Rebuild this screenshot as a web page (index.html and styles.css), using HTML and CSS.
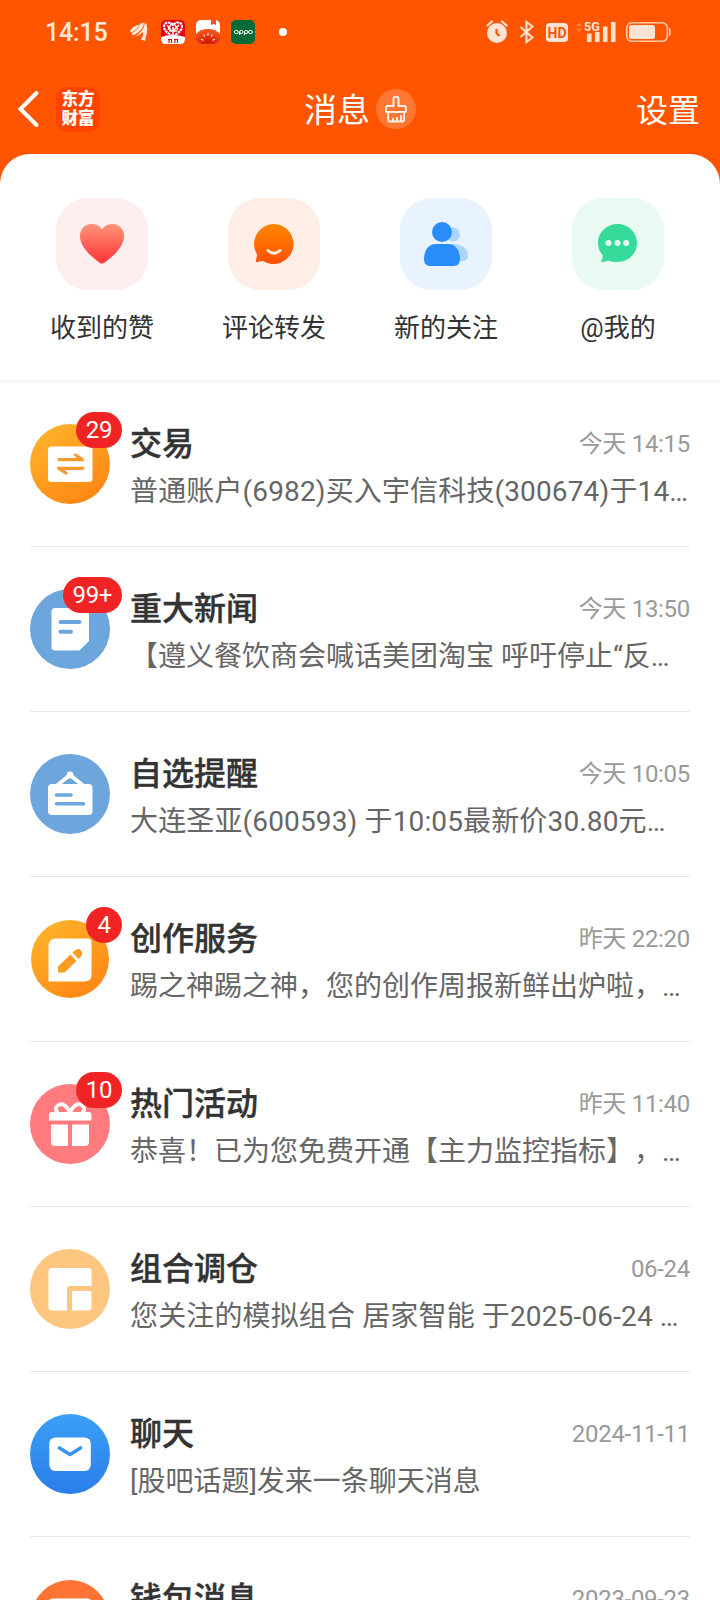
FILE: index.html
```html
<!DOCTYPE html>
<html lang="zh-CN">
<head>
<meta charset="utf-8">
<title>消息</title>
<link rel="stylesheet" href="styles.css">
</head>
<body>
<div class="screen">
  <div class="status">
    <span class="clock">14:15</span>
    <svg class="st-wing" width="18" height="20" viewBox="0 0 18 20" fill="#ffe9dc"><path d="M0 8.500Q3 4 9.500 2.500Q8 8 1 10.500Z"/><path d="M10 1.800L14.200 .5Q13 9 3 13.500L1.500 11.200Q9 8 10 1.800Z"/><path d="M15 .5Q18 3 17 10Q16 15 15 19L11 17.500Q14.500 11.500 12.500 10Q10 13.500 5 14.500Q14 9 15 .5Z"/></svg>
    <svg class="st-app" width="24" height="24" viewBox="0 0 24 24"><rect width="24" height="24" rx="5" fill="#e60012"/><path d="M0 17Q12 13 24 17V19Q24 24 19 24H5Q0 24 0 19Z" fill="#fff"/><path d="M12 16C6 13 3 10 3 6.500C3 2 9 1 12 5C15 1 21 2 21 6.500C21 10 18 13 12 16Z" fill="none" stroke="#fff" stroke-width="2.200" stroke-dasharray="2.600 .7"/><path d="M6 5L10 10M10 4L7 10M14 5L17 10M18 5L13 10M12 7V19M8 11H16" stroke="#fff" stroke-width="1.500"/><path d="M8 19V23M10.500 19V23M14 19V23M16.500 19V23M7 19.500H10.500M13 19.500H16.500" stroke="#c01622" stroke-width="1.200"/></svg>
    <svg class="st-app" width="24" height="24" viewBox="0 0 24 24"><defs><radialGradient id="tom" cx=".5" cy=".9" r=".7"><stop offset="0" stop-color="#cf1408"/><stop offset="1" stop-color="#f2501c"/></radialGradient></defs><rect width="24" height="24" rx="5" fill="#fff"/><path d="M15 0H20V5L17.500 4L15 5Z" fill="#f0541e"/><path d="M0 14Q4 9 12 9Q20 9 24 14V19Q24 24 19 24H5Q0 24 0 19Z" fill="url(#tom)"/><path d="M12 13.500V15M8 15L8.500 16M16 15L15.500 16M5.500 19.500L7 20M18.500 19.500L17 20" stroke="#ffe7d0" stroke-width="1.300" stroke-linecap="round"/></svg>
    <svg class="st-app" width="24" height="24" viewBox="0 0 24 24" fill="none" stroke="#fff" stroke-width="1"><rect width="24" height="24" rx="5" fill="#046a38" stroke="none"/><ellipse cx="5.400" cy="12" rx="2" ry="1.600"/><path d="M8.600 15V12"/><ellipse cx="10.300" cy="12" rx="1.700" ry="1.600"/><path d="M13.500 15V12"/><ellipse cx="15.200" cy="12" rx="1.700" ry="1.600"/><ellipse cx="19.500" cy="12" rx="2" ry="1.600"/></svg>
    <span class="dot"></span>
    <svg class="st-right" width="190" height="28" viewBox="0 0 190 28" fill="#ffe4d5">
      <circle cx="14" cy="15" r="10"/><path d="M4.500 7.500L9 3.500M23.500 7.500L19 3.500" stroke="#ffe4d5" stroke-width="2.200" stroke-linecap="round"/><path d="M13.500 11V15L16.500 18" fill="none" stroke="#ff5500" stroke-width="2.200"/>
      <path d="M37.500 9L49.500 19.500L43.500 24V4L49.500 8.500L37.500 19" fill="none" stroke="#ffe4d5" stroke-width="2"/>
      <rect x="63" y="5" width="22" height="19" rx="4"/><text x="74" y="20" text-anchor="middle" class="hd">HD</text>
      <path d="M93 8L96 4.500L99 8ZM93 10.500L96 14L99 10.500Z" fill="#ff7f3e"/>
      <text x="101" y="12.500" class="g5">5G</text>
      <path d="M104 15.500H108.500V24H104ZM112 14H116.500V24H112ZM120 8.500H124.500V24H120ZM128 4H132.500V24H128Z"/>
      <rect x="143.800" y="4.800" width="40.500" height="18.500" rx="5" fill="none" stroke="#ffcaa9" stroke-width="1.600"/><rect x="146" y="7" width="26" height="14" rx="2.500"/><path d="M186 10Q187.500 10 187.500 11.500V16.500Q187.500 18 186 18Z"/>
    </svg>
  </div>
  <div class="nav">
    <svg class="back" width="24" height="40" viewBox="0 0 24 40" fill="none" stroke="#fff" stroke-width="4" stroke-linecap="round" stroke-linejoin="miter"><path d="M19.500 4L3.500 20L19.500 36"/></svg>
    <div class="logo"><span>东方</span><span>财富</span></div>
    <div class="heading"><span>消息</span>
      <svg width="40" height="40" viewBox="0 0 40 40" fill="none" stroke="#fff0e6" stroke-width="1.900" stroke-linejoin="round"><circle cx="20" cy="20" r="20" fill="#ff7733" stroke="none"/><path d="M17.500 17V9.500Q17.500 8 19 8H21Q22.500 8 22.500 9.500V17H28.500Q30 17 30 18.500V22Q30 23 29 23H11Q10 23 10 22V18.500Q10 17 11.500 17Z"/><path d="M12.200 23V31Q12.200 32.500 13.700 32.500H26.300Q28 32.500 28 31V23M17 32V29M21 32V28M25 32V26"/></svg>
    </div>
    <span class="settings">设置</span>
  </div>
  <main class="sheet">
    <div class="shortcuts">
      <div class="short"><div class="tile pink"><svg width="92" height="92" viewBox="0 0 92 92"><defs><linearGradient id="h" x2="0" y2="1"><stop stop-color="#ff9478"/><stop offset=".85" stop-color="#ff4040"/></linearGradient></defs><path d="M46 31.500C49 27 53 26 57 26C63 26 68 31 68 38C68 48 59 57 48 65Q46 66.500 44 65C33 57 24 48 24 38C24 31 29 26 35 26C39 26 43 27 46 31.500Z" fill="url(#h)"/></svg></div><span>收到的赞</span></div>
      <div class="short"><div class="tile peach"><svg width="92" height="92" viewBox="0 0 92 92"><defs><linearGradient id="c" x2="0" y2="1"><stop stop-color="#ff8700"/><stop offset="1" stop-color="#ff5000"/></linearGradient></defs><path d="M46 26A20 20 0 1 1 35 63Q32 63 29.500 64Q28 64.500 28 63C28 60 29.500 59 28.800 56A20 20 0 0 1 46 26Z" fill="url(#c)"/><path d="M40 52.500Q46 58 52 52.500" fill="none" stroke="#ffeee4" stroke-width="3" stroke-linecap="round"/></svg></div><span>评论转发</span></div>
      <div class="short"><div class="tile blue"><svg width="92" height="92" viewBox="0 0 92 92"><g fill="#a9d5ff"><circle cx="53" cy="36.500" r="7"/><path d="M50 46H54Q68 47 68 58Q68 63 62 63H50Z"/></g><g fill="#288dfa"><circle cx="42" cy="34" r="10"/><path d="M36 46H48C55 46 60 52 60 61Q60 68 54 68H30Q24 68 24 61C24 52 29 46 36 46Z"/></g></svg></div><span>新的关注</span></div>
      <div class="short"><div class="tile green"><svg width="92" height="92" viewBox="0 0 92 92"><path d="M45.500 26C56 26 65 34 65 45S56 64 45.500 64Q40 64 36 62.500Q33 64 30 64Q28.500 64 29.800 62Q31 60 30.500 57Q26 52 26 45C26 34 35 26 45.500 26Z" fill="#36db9c"/><g fill="#e8faf2"><circle cx="36.500" cy="45" r="3"/><circle cx="45.500" cy="45" r="3"/><circle cx="54.200" cy="45" r="3"/></g></svg></div><span>@我的</span></div>
    </div>
    <div class="row"><div class="avatar"><svg width="80" height="80" viewBox="0 0 80 80"><defs><linearGradient id="o" x1=".1" x2=".8" y2="1"><stop stop-color="#ffb52c"/><stop offset="1" stop-color="#ff8513"/></linearGradient></defs><circle cx="40" cy="40" r="40" fill="url(#o)"/><rect x="18" y="22.500" width="44.500" height="35.500" rx="3.500" fill="#fff"/><path d="M28.500 34H47L43.500 31Q43.500 29 46 29.500L53 34Q54 35 54 37.200H28.500Q26.500 36 28.500 34ZM52.500 46H34.500L38 49Q38 51 35.500 50.500L28 46Q27 45 27 42.800H54Q55 45 52.500 46Z" fill="#f59a2f"/></svg><b class="badge">29</b></div><div class="body"><div class="top"><h2>交易</h2><time>今天 14:15</time></div><p class="loose">普通账户(6982)买入宇信科技(300674)于14…</p></div></div>
    <div class="row"><div class="avatar"><svg width="80" height="80" viewBox="0 0 80 80"><circle cx="40" cy="40" r="40" fill="#6ca6dc"/><path d="M25 19H55.500Q59 19 59 22.500V52L49.500 61.500H25Q21.500 61.500 21.500 58V22.500Q21.500 19 25 19Z" fill="#fff"/><path d="M30.500 33H49.500M30.500 42.800H41" stroke="#6ca6dc" stroke-width="4" stroke-linecap="round"/></svg><b class="badge">99+</b></div><div class="body"><div class="top"><h2>重大新闻</h2><time>今天 13:50</time></div><p>【遵义餐饮商会喊话美团淘宝 呼吁停止“反…</p></div></div>
    <div class="row"><div class="avatar"><svg width="80" height="80" viewBox="0 0 80 80"><circle cx="40" cy="40" r="40" fill="#6ca6dc"/><path d="M27.500 31L40 21L52.500 31" fill="none" stroke="#fff" stroke-width="4"/><circle cx="40" cy="21" r="3.400" fill="#fff"/><rect x="18" y="30" width="44.500" height="31" rx="4" fill="#fff"/><path d="M26.500 41H41M26.500 49.700H53.500" stroke="#6ca6dc" stroke-width="3.600" stroke-linecap="round"/></svg></div><div class="body"><div class="top"><h2>自选提醒</h2><time>今天 10:05</time></div><p class="loose">大连圣亚(600593) 于10:05最新价30.80元…</p></div></div>
    <div class="row"><div class="avatar"><svg width="80" height="80" viewBox="0 0 80 80"><circle cx="40" cy="40" r="39" fill="url(#o)"/><path d="M26 19.500H58Q61.500 19.500 61.500 23V55.500Q61.500 62.500 54.500 62.500H18.500V27Q18.500 19.500 26 19.500Z" fill="#fff"/><path d="M28 47.500L40.500 35.500L46.500 42L34.500 53.500H28ZM42.500 33.500L45.500 31Q48.500 29 51 31.500Q53.500 34.500 51 37.500L48.500 40Z" fill="#f99c24"/></svg><b class="badge">4</b></div><div class="body"><div class="top"><h2>创作服务</h2><time>昨天 22:20</time></div><p>踢之神踢之神，您的创作周报新鲜出炉啦，…</p></div></div>
    <div class="row"><div class="avatar"><svg width="80" height="80" viewBox="0 0 80 80"><circle cx="40" cy="40" r="40" fill="#ff7b7e"/><g fill="#fff"><path d="M22 28H58.500Q61.500 28 61.500 31V36.500H19V31Q19 28 22 28ZM21 40.500H38V62H25Q21 62 21 58ZM42 40.500H59V58Q59 62 55 62H42Z"/></g><path d="M40 28C36 21 32 19 28.500 21C24 24 25.500 28 29 28M40 28C44 21 48 19 51.500 21C56 24 54.500 28 51 28" fill="none" stroke="#fff" stroke-width="3.600"/></svg><b class="badge">10</b></div><div class="body"><div class="top"><h2>热门活动</h2><time>昨天 11:40</time></div><p>恭喜！已为您免费开通【主力监控指标】，…</p></div></div>
    <div class="row"><div class="avatar"><svg width="80" height="80" viewBox="0 0 80 80"><circle cx="40" cy="40" r="40" fill="#ffc680"/><path d="M22 19H58Q61.500 19 61.500 22.500V37H40Q37 37 37 40V61.500H22Q18.500 61.500 18.500 58V22.500Q18.500 19 22 19ZM42 42H61.500V58Q61.500 61.500 58 61.500H42Z" fill="#fff"/></svg></div><div class="body"><div class="top"><h2>组合调仓</h2><time>06-24</time></div><p class="loose">您关注的模拟组合 居家智能 于2025-06-24 …</p></div></div>
    <div class="row"><div class="avatar"><svg width="80" height="80" viewBox="0 0 80 80"><defs><linearGradient id="m" x2="0" y2="1"><stop stop-color="#3ba0f6"/><stop offset="1" stop-color="#2b7ee9"/></linearGradient></defs><circle cx="40" cy="40" r="40" fill="url(#m)"/><rect x="19.300" y="23.500" width="41.500" height="33.500" rx="6" fill="#fff"/><path d="M29.500 34L40 40.500L50.500 34" fill="none" stroke="#3993f0" stroke-width="3.600" stroke-linecap="round" stroke-linejoin="round"/></svg></div><div class="body"><div class="top"><h2>聊天</h2><time>2024-11-11</time></div><p>[股吧话题]发来一条聊天消息</p></div></div>
    <div class="row"><div class="avatar"><svg width="80" height="80" viewBox="0 0 80 80"><circle cx="40" cy="40" r="39" fill="#ff7434"/><rect x="18.500" y="19.500" width="43" height="40" rx="4" fill="#fff"/></svg></div><div class="body"><div class="top"><h2>钱包消息</h2><time>2023-09-23</time></div></div></div>
  </main>
</div>
</body>
</html>
```
FILE: styles.css
```css
* { box-sizing: border-box; }
body { margin: 0; background: #fff; font-family: Roboto, "Noto Sans CJK SC", sans-serif; text-spacing-trim: space-all; }
svg { display: block; flex: none; }
.screen { width: 720px; height: 1600px; overflow: hidden; background: #ff5500; display: flex; flex-direction: column; }
.status { height: 64px; flex: none; display: flex; align-items: center; padding-left: 45px; }
.clock { width: 85px; padding-top: 2px; font-size: 25px; line-height: 62px; font-weight: 500; letter-spacing: -.2px; color: #ffe9dc; }
.st-wing { margin-right: 13px; }
.st-app { margin-right: 11px; }
.dot { width: 8px; height: 8px; border-radius: 50%; background: #fff; margin-left: 13px; }
.st-right { margin-left: auto; margin-right: 47px; }
.hd { font: 700 14px Roboto, sans-serif; fill: #ff5500; }
.g5 { font: 700 12.500px Roboto, sans-serif; }
.nav { height: 90px; flex: none; display: flex; align-items: center; padding: 0 20px 0 17px; position: relative; }
.back { margin-right: 15px; }
.logo { width: 44px; height: 45px; border-radius: 10px; background: #ff4400; color: #fff; display: flex; flex-direction: column; align-items: center; justify-content: center; font-size: 16.500px; line-height: 19px; font-weight: 900; }
.heading { position: absolute; left: 304px; top: 0; height: 90px; display: flex; align-items: center; gap: 6px; color: #fff; font-size: 33px; }
.heading span, .settings { line-height: 44px; padding-top: 3px; }
.settings { margin-left: auto; font-size: 32px; color: #fff; }
.sheet { flex: 1; background: #fff; border-radius: 30px 30px 0 0; min-height: 0; }
.shortcuts { height: 228px; display: flex; padding: 44px 16px 0; border-bottom: 2px solid #f7f7f7; }
.short { flex: 1; display: flex; flex-direction: column; align-items: center; font-size: 26px; line-height: 38px; color: #333; gap: 19px; }
.tile { width: 92px; height: 92px; border-radius: 32px; }
.pink { background: #ffeeee; }
.peach { background: #ffeee5; }
.blue { background: #e8f3ff; }
.green { background: #e8faf2; }
.row { height: 165px; margin: 0 30px; border-bottom: 1px solid #e6e6e6; display: flex; padding-top: 42px; gap: 20px; }
.avatar { width: 80px; height: 80px; position: relative; flex: none; }
.badge { position: absolute; right: -12px; top: -12px; min-width: 36px; height: 36px; padding: 0 10px; border-radius: 18px; background: #f02424; color: #fff; font-size: 24px; letter-spacing: -.4px; font-weight: 400; line-height: 36px; text-align: center; }
.body { flex: 1; min-width: 0; }
.top { display: flex; justify-content: space-between; align-items: center; height: 40px; }
h2 { margin: 0; font-size: 32px; line-height: 40px; font-weight: 500; color: #333; -webkit-text-stroke: .4px #333; }
time { font-size: 24px; line-height: 40px; letter-spacing: -.3px; color: #999; }
p { margin: 10px 0 0; font-size: 28px; line-height: 36px; color: #666; white-space: nowrap; }
.loose { letter-spacing: .14px; }
```
